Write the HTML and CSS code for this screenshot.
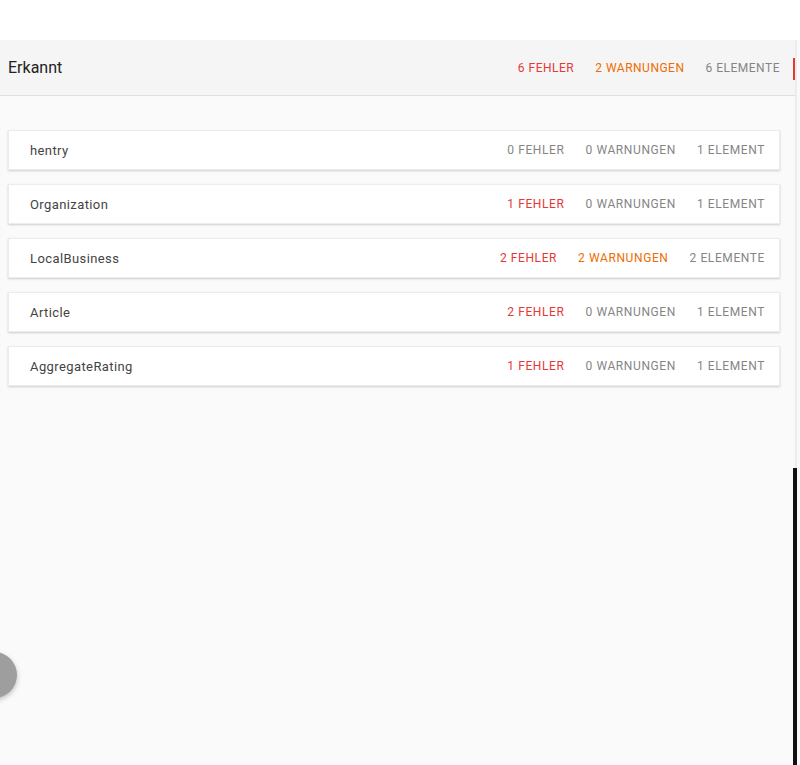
FILE: index.html
```html
<!DOCTYPE html>
<html lang="de">
<head>
    <meta charset="UTF-8">
    <meta name="viewport" content="width=device-width, initial-scale=1.0">
    <title>Erkannt</title>
    <link rel="stylesheet" href="styles.css">
</head>
<body>
    <div class="topbar"></div>

    <div class="layout">
        <div class="main">
            <div class="summary">
                <h2 class="summary-title">Erkannt</h2>
                <div class="counts">
                    <span class="error">6 Fehler</span>
                    <span class="warning">2 Warnungen</span>
                    <span>6 Elemente</span>
                </div>
                <span class="marker"></span>
            </div>

            <div class="list">
                <div class="card">
                    <span class="name">hentry</span>
                    <div class="counts">
                        <span>0 Fehler</span>
                        <span>0 Warnungen</span>
                        <span>1 Element</span>
                    </div>
                </div>
                <div class="card">
                    <span class="name">Organization</span>
                    <div class="counts">
                        <span class="error">1 Fehler</span>
                        <span>0 Warnungen</span>
                        <span>1 Element</span>
                    </div>
                </div>
                <div class="card">
                    <span class="name">LocalBusiness</span>
                    <div class="counts">
                        <span class="error">2 Fehler</span>
                        <span class="warning">2 Warnungen</span>
                        <span>2 Elemente</span>
                    </div>
                </div>
                <div class="card">
                    <span class="name">Article</span>
                    <div class="counts">
                        <span class="error">2 Fehler</span>
                        <span>0 Warnungen</span>
                        <span>1 Element</span>
                    </div>
                </div>
                <div class="card">
                    <span class="name">AggregateRating</span>
                    <div class="counts">
                        <span class="error">1 Fehler</span>
                        <span>0 Warnungen</span>
                        <span>1 Element</span>
                    </div>
                </div>
            </div>
        </div>

        <div class="side">
            <div class="track"></div>
            <div class="thumb"></div>
        </div>
    </div>

    <button class="fab"></button>
</body>
</html>
```

FILE: styles.css
```css
html, body {
    height: 100%;
}

body {
    margin: 0;
    display: flex;
    flex-direction: column;
    font-family: Roboto, "Liberation Sans", Arial, sans-serif;
    background: #fafafa;
    color: #333;
    overflow: hidden;
}

.topbar {
    height: 40px;
    background: #ffffff;
    flex-shrink: 0;
}

.layout {
    flex: 1;
    display: flex;
}

.main {
    flex: 1;
    box-shadow: inset 0 2px 2px -1px rgba(0, 0, 0, 0.08);
}

/* Summary header */
.summary {
    position: relative;
    height: 55px;
    display: flex;
    align-items: center;
    justify-content: space-between;
    padding: 0 15px 0 8px;
    background: #f5f5f5;
    border-bottom: 1px solid #e0e0e0;
}

.summary-title {
    margin: 0;
    font-size: 16px;
    font-weight: 400;
    color: #222;
}

.summary .counts {
    letter-spacing: 0.5px;
}

.marker {
    position: absolute;
    right: 0;
    top: 18px;
    width: 2px;
    height: 22px;
    background: #e53935;
}

.counts {
    display: flex;
    gap: 21px;
    font-size: 12px;
    text-transform: uppercase;
    color: #858585;
}

.error {
    color: #e53935;
}

.warning {
    color: #ef6c00;
}

/* Type list */
.list {
    display: flex;
    flex-direction: column;
    gap: 14px;
    padding: 34px 15px 0 8px;
}

.card {
    height: 38px;
    display: flex;
    align-items: center;
    justify-content: space-between;
    padding: 0 14px 0 21px;
    background: #ffffff;
    border: 1px solid #ececec;
    box-shadow: 0 1px 2px rgba(0, 0, 0, 0.18);
}

.card .name {
    font-size: 13px;
    letter-spacing: 0.4px;
    color: #444;
}

.card .counts {
    letter-spacing: 0.6px;
}

/* Side rail */
.side {
    width: 5px;
    display: flex;
    flex-direction: column;
}

.track {
    height: 428px;
    border-left: 2px solid #ececec;
}

.thumb {
    flex: 1;
    width: 4px;
    margin-left: -2px;
    background: #111;
}

.fab {
    position: absolute;
    left: -29px;
    top: 652px;
    width: 46px;
    height: 46px;
    border: none;
    border-radius: 50%;
    background: #9e9e9e;
    box-shadow: 0 2px 5px rgba(0, 0, 0, 0.25);
}
```
